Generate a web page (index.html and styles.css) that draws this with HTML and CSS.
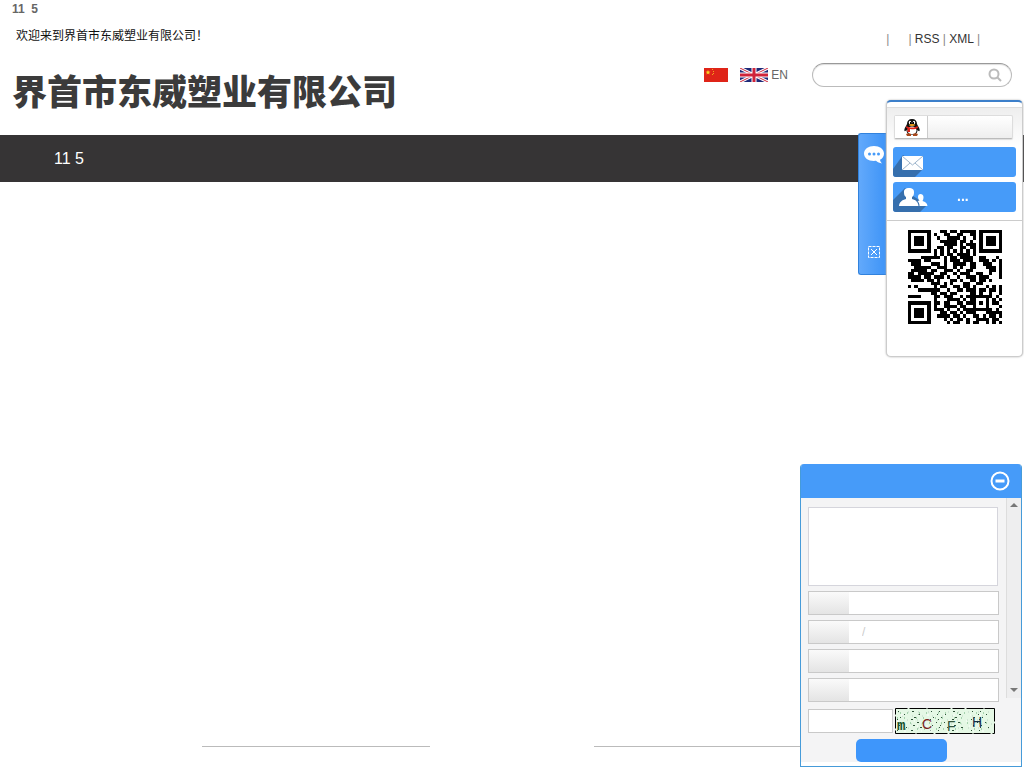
FILE: index.html
```html
<!DOCTYPE html>
<html lang="zh-CN">
<head>
<meta charset="utf-8">
<meta name="viewport" content="width=device-width, initial-scale=1">
<title>界首市东威塑业有限公司</title>
<link rel="stylesheet" href="styles.css">
</head>
<body>
<header class="header">
  <div class="brand">
    <strong class="counter">11&nbsp; 5</strong>
    <p class="welcome">欢迎来到界首市东威塑业有限公司！</p>
    <h1 class="company">界首市东威塑业有限公司</h1>
  </div>
  <div class="tools">
    <div class="quick"><span class="gap">|</span><span>| <a href="#rss">RSS</a> | <a href="#xml">XML</a> |</span></div>
    <div class="tool-row">
      <a class="flag" href="#cn" aria-label="中文"><svg width="24" height="14" viewBox="0 0 24 14"><path fill="#df2418" d="M0 0h24v14H0z"/><path fill="#f9d423" d="m4 2 .7 1.6 1.7.1-1.3 1.1.4 1.7L4 5.600l-1.500.9.4-1.700-1.300-1.100 1.700-.1z"/><path fill="#f2a51c" d="M8 1h1v1H8zM9 3h1v1H9zM9 5h1v1H9zM8 6h1v1H8z"/></svg></a>
      <a class="flag en" href="#en"><svg width="28" height="14" viewBox="0 0 28 14"><path fill="#1f2a78" d="M0 0h28v14H0z"/><path stroke="#fff" stroke-width="3" d="m0 0 28 14M28 0 0 14"/><path stroke="#d0243a" d="m0 0 28 14M28 0 0 14"/><path stroke="#fff" stroke-width="5" d="M14 0v14M0 7h28"/><path stroke="#d0243a" stroke-width="3" d="M14 0v14M0 7h28"/></svg><span>EN</span></a>
      <form class="search">
        <input type="search" aria-label="搜索">
        <button type="button" aria-label="搜索"><svg width="14" height="14" viewBox="0 0 14 14" fill="none" stroke="#bbb"><circle cx="6" cy="6" r="4.500" stroke-width="2"/><path stroke-width="2" d="m9 9 4 4"/></svg></button>
      </form>
    </div>
  </div>
</header>
<nav class="nav"><a href="#home">11 5</a></nav>
<main class="main"></main>
<footer class="footer"><hr><hr></footer>

<aside class="service">
  <div class="service-tab">
    <svg width="20" height="18" viewBox="0 0 20 18"><path fill="#fff" d="M10 0c5.500 0 10 3 10 7.500 0 3-1.500 5-4 6.200.2 1.500.8 2.500 2 3.800-2.500-.3-4.500-1.300-6-2.700C5 15.500 0 12.500 0 7.500 0 3 4.500 0 10 0z"/><g fill="#469bf9"><circle cx="5.500" cy="8" r="1.500"/><circle cx="10" cy="8" r="1.500"/><circle cx="14.500" cy="8" r="1.500"/></g></svg>
    <button type="button" aria-label="关闭"><svg width="12" height="12" viewBox="0 0 12 12" fill="none" stroke="#fff"><path stroke-dasharray="3 1" d="M.5.5h11v11H.5z"/><path d="m3 3 6 6M9 3 3 9"/></svg></button>
  </div>
  <div class="service-card">
    <div class="qq-area"><a class="qq" href="#qq" aria-label="QQ"><span class="qq-icon"><svg width="16" height="17" viewBox="0 0 16 17"><path fill="#111" d="M8 0c3.300 0 5 2 5 5l1 2c1.500 2 2 4 1.500 5-.5.500-1.500-.5-2-1 0 3-2 5-5.500 5s-5.500-2-5.500-5c-.5.500-1.500 1.500-2 1C0 11 .500 9 2 7l1-2c0-3 1.700-5 5-5z"/><ellipse cx="8" cy="11.500" rx="4.500" ry="4" fill="#fff"/><ellipse cx="6" cy="3.500" rx="1.200" ry="1.700" fill="#fff"/><ellipse cx="10" cy="3.500" rx="1.200" ry="1.700" fill="#fff"/><path d="M6 3h1v2H6zM9 3h1v2H9z"/><ellipse cx="8" cy="6" rx="3" ry="1" fill="#f6a21a"/><path fill="#e32219" d="M2.500 7c3 2 8 2 11 0l.5 2c-3 1.500-5.500 1.500-8 1v3H3.500v-3.500L2 8.500z"/><path fill="#a8481c" d="M2 15c2-1 4-1 5 0v2H3zM9 15c1-1 3-1 5 0l-1 2H9z"/></svg></span></a></div>
    <a class="blue-link" href="#mail" aria-label="邮件"><svg width="36" height="30" viewBox="0 0 36 30"><path fill="#366fad" d="M0 22 10 8l20 14-8 8H0z"/><path fill="#fff" d="M9 9h21v14H9z"/><path fill="none" stroke="#9db5cc" d="m9 9 10.500 9L30 9M9 23l8-7M30 23l-8-7"/></svg></a>
    <a class="blue-link" href="#friends"><svg width="36" height="30" viewBox="0 0 36 30"><path fill="#366fad" d="M0 18 12 6l8 8 14 9-7 7H0z"/><path fill="#fff" d="M11 10c0-3 2-4 5-4s5 1 5 4c0 3-.5 4-2 5v2c4 1 6 3 6.500 7H6c.5-4 3-6 7-7v-2c-1.500-1-2-2-2-5z"/><path fill="#fff" d="M25 15c0-2 1-3 2.500-3s3 1 3 3-.5 3-1 4c3 1 4.500 2 5 5h-8c0-2.500-1-4-2-5l2-.5c-.5-.5-1.500-1.500-1.500-3.500z"/></svg><b>...</b></a>
    <div class="qr-area"><svg id="qr" width="94" height="94" viewBox="0 0 29 29" role="img" aria-label="二维码"></svg></div>
  </div>
</aside>

<section class="message">
  <div class="message-head"><button type="button" aria-label="最小化"><svg width="20" height="20" viewBox="0 0 20 20" fill="none" stroke="#fff"><circle cx="10" cy="10" r="8.500" stroke-width="2"/><path stroke-width="3" d="M5.500 10h9"/></svg></button></div>
  <div class="message-body">
    <form class="message-form">
      <textarea aria-label="留言"></textarea>
      <label class="field"><span></span><input type="text" aria-label="姓名"></label>
      <label class="field"><span></span><input type="text" aria-label="电话" placeholder="/"></label>
      <label class="field"><span></span><input type="text" aria-label="邮箱"></label>
      <label class="field"><span></span><input type="text" aria-label="地址"></label>
    </form>
    <div class="scroll"><svg width="8" height="5" viewBox="0 0 8 5"><path fill="#777" d="m0 4 4-4 4 4z"/></svg><svg width="8" height="5" viewBox="0 0 8 5"><path fill="#777" d="m0 0 4 4 4-4z"/></svg></div>
  </div>
  <div class="verify">
    <input type="text" aria-label="验证码">
    <svg width="100" height="26" viewBox="0 0 100 26"><path fill="#e5f8e5" d="M0 0h100v26H0z"/><g fill="none" stroke-width="1"><path stroke="#bcd3c4" stroke-dasharray="1 9" d="M3 4h95M7 8h90M2 12h95M6 16h91M3 20h95"/><path stroke="#2f5239" stroke-dasharray="1 13 2 17 1 7" d="M3 3.500h95M9 6.500h88M5 9.500h93M2 11.500h96M8 14.500h90M4 17.500h94M11 19.500h87M2 22.500h96"/><path stroke="#68b078" stroke-dasharray="1 6 1 11" d="M5 5h92M2 10h95M8 15h90M3 21h95"/><path stroke="#fff" stroke-dasharray="2 15 1 8" d="M6 7h92M2 13h95M5 18h92M9 23h85"/></g><path fill="none" stroke="#000" stroke-dasharray="12 2 17 1 23 2" d="M.5.5h99v25H.5z"/><g font-family="Liberation Mono" font-size="14"><text x="2" y="22" font-weight="bold" fill="#17522a">m</text><text x="27" y="21" font-family="Liberation Sans" fill="#7c1f1c">C</text><text x="52" y="23" font-family="Liberation Sans" fill="#31533a">F</text><text x="77" y="19" font-family="Liberation Sans" fill="#132f46">H</text></g></svg>
  </div>
  <div class="send"><button type="button" aria-label="发送"></button></div>
</section>
<script src="qr.js"></script>
</body>
</html>
```
FILE: styles.css
```css
* { box-sizing: border-box; }
body { margin: 0; min-height: 100vh; display: flex; flex-direction: column; background: #fff; color: #666; font: 12px/18px "Liberation Sans", "Noto Sans CJK SC", sans-serif; }
a { color: #333; text-decoration: none; }
button { padding: 0; border: 0; background: none; cursor: pointer; }
svg { display: block; flex: none; }
.header { height: 135px; padding: 0 12px; display: flex; justify-content: space-between; }
.counter { display: block; }
.welcome { margin: 9px 0 0 4px; color: #111; }
.company { margin: 21px 0 0; color: #3b3b3b; font: 900 35px/48px "Noto Sans CJK SC", sans-serif; white-space: nowrap; }
.tools { padding-top: 30px; }
.quick { display: flex; justify-content: flex-end; gap: 19px; padding-right: 32px; color: #888; }
.tool-row { display: flex; align-items: center; gap: 12px; margin-top: 15px; }
.en { display: flex; align-items: center; gap: 3px; margin-right: 12px; color: #666; }
.search { display: flex; align-items: center; width: 200px; height: 24px; padding: 0 9px; border: 1px solid #bbb; border-top-color: #999; border-radius: 12px; box-shadow: inset 0 1px 1px #ddd; }
.search input { flex: 1; min-width: 0; border: 0; outline: 0; background: none; }
.nav { height: 47px; padding: 0 54px; background: #363435; font-size: 16px; line-height: 47px; }
.nav a { color: #fff; }
.main { flex: 1; }
.footer { display: flex; gap: 164px; height: 22px; padding-left: 202px; }
.footer hr { width: 228px; height: 1px; margin: 0; border: 0; background: #bbb; }
.service { position: fixed; top: 100px; right: 1px; display: flex; align-items: flex-start; }
.service-tab { display: flex; flex-direction: column; align-items: center; justify-content: space-between; width: 28px; height: 142px; margin-top: 33px; padding: 12px 0 16px 2px; border: 1px solid #3182dd; border-right: 0; border-radius: 3px 0 0 3px; background: linear-gradient(90deg, #62a9fb, #3e94f7); }
.service-card { width: 137px; height: 257px; border: 1px solid #ccc; border-top: 2px solid #3c7fca; border-radius: 5px; background: #fff; box-shadow: 0 0 2px #aaa; }
.qq-area { height: 40px; margin-top: 5px; padding: 7px 9px 0 7px; border-top: 1px solid #ddd; background: linear-gradient(#eee, #fff); }
.qq { display: block; height: 24px; border: 1px solid #ddd; border-bottom-color: #bbb; border-radius: 2px; background: linear-gradient(#fff, #eee); box-shadow: 0 1px 1px #ddd; }
.qq-icon { display: block; width: 33px; height: 22px; padding: 3px 0 0 9px; border-right: 1px solid #ccc; background: #fff; }
.blue-link { display: flex; height: 30px; margin: 0 6px 5px; border-radius: 3px; background: #469bf9; color: #fff; overflow: hidden; }
.blue-link b { padding-left: 28px; font-size: 14px; line-height: 28px; }
.qr-area { display: flex; justify-content: center; margin-top: 8px; padding-top: 9px; border-top: 1px solid #ccc; }
.message { position: fixed; right: 2px; bottom: 1px; width: 222px; border: 1px solid #469bd9; border-top: 0; border-radius: 4px 4px 0 0; background: #f4f4f5; overflow: hidden; }
.message-head { display: flex; align-items: center; justify-content: flex-end; height: 34px; padding-right: 11px; background: #469bf9; }
.message-body { display: flex; justify-content: space-between; height: 200px; }
.message-form { width: 198px; padding: 9px 0 0 7px; }
.message textarea { display: block; width: 190px; height: 79px; margin: 0 0 5px; border: 1px solid #d5d5dc; background: #fff; resize: none; }
.field { display: flex; height: 24px; margin-bottom: 5px; border: 1px solid #c9c9c9; background: #fff; }
.field span { width: 40px; background: linear-gradient(#fafafa, #e4e4e4); }
.field input { flex: 1; min-width: 0; padding: 0 13px; border: 0; background: none; font: 12px "Liberation Sans", sans-serif; }
.field input::placeholder { color: #ccc; }
.scroll { display: flex; flex-direction: column; align-items: center; justify-content: space-between; width: 15px; padding: 5px 0; border-left: 1px solid #ddd; background: #eeeeef; }
.verify { display: flex; align-items: center; gap: 2px; margin-top: 10px; padding-left: 7px; }
.verify input { width: 85px; height: 24px; border: 1px solid #c9c9c9; background: #fff; }
.send { display: flex; padding: 5px 0 0 55px; border-bottom: 4px solid #fff; }
.send button { width: 91px; height: 23px; border-radius: 5px; background: #3e96fb; }
```
FILE: qr.js
```js
const rows = [
  "11111110001101101111101111111",
  "10000010100110011001101000001",
  "10111010010011110100101011101",
  "10111010001111101101001011101",
  "10111010000111101011101011101",
  "10000010011011001101101000001",
  "11111110101010101010101111111",
  "00000000101011011110100000000",
  "00001111110101101111001100010",
  "11110110000101110111001110101",
  "01110001110100111101100111001",
  "00111110011100101001100011101",
  "01111101100111010011000001101",
  "11011111001100101110011001001",
  "11110110111010010011101110001",
  "01111011010001101001101101000",
  "00000001110101000110011000000",
  "10100000101100110110100010101",
  "00011111110010011011101101101",
  "00000001101101100001101001001",
  "11110000110111001011111111010",
  "00000000100011110101100010101",
  "11111110110110011011101010110",
  "10000010100111101100100010001",
  "10111010111010010111111111010",
  "10111010001101101011100011111",
  "10111010011110110100110101101",
  "10000010000101011010011110110",
  "11111110000010110010110010101"
];
const path = document.createElementNS("http://www.w3.org/2000/svg", "path");
path.setAttribute("d", rows.map((row, y) => [...row].map((cell, x) => cell === "1" ? `M${x} ${y}h1v1h-1z` : "").join("")).join(""));
path.setAttribute("shape-rendering", "crispEdges");
document.getElementById("qr").append(path);
```
